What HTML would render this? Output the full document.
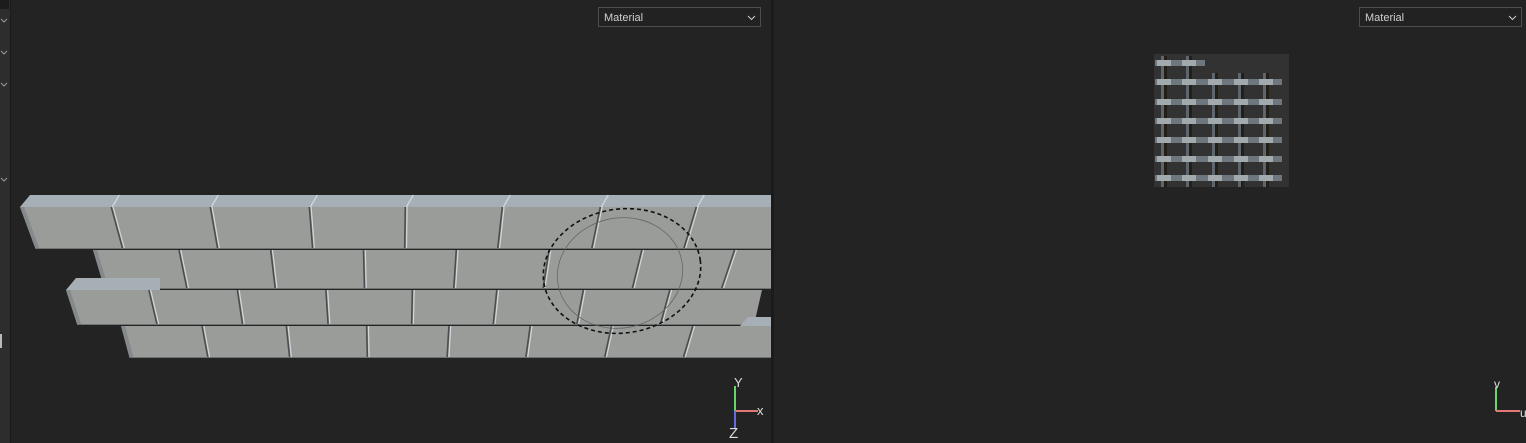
<!DOCTYPE html>
<html><head><meta charset="utf-8">
<style>
html,body{margin:0;padding:0;background:#232323;width:1526px;height:443px;overflow:hidden;font-family:"Liberation Sans",sans-serif}
.dd{position:absolute;top:7px;width:163px;height:20px;border:1px solid #4e4e4e;box-sizing:border-box;background:#222;color:#cfcfcf;font-size:11px;line-height:20px;padding-left:5px}
.dd svg{position:absolute;right:4px;top:7px}
</style></head><body>
<svg id="s" width="1526" height="443" style="position:absolute;left:0;top:0">
<rect x="0" y="0" width="10" height="443" fill="#2d2d2d"/>
<rect x="0" y="0" width="9" height="9" fill="#1c1c1c"/>
<rect x="10" y="0" width="1" height="443" fill="#1b1b1b"/>
<rect x="771" y="0" width="3" height="443" fill="#1b1b1b"/>
<g stroke="#9a9a9a" fill="none" stroke-width="1">
<path d="M1 19 L4 22 L7 19"/><path d="M1 51 L4 54 L7 51"/><path d="M1 83 L4 86 L7 83"/><path d="M1 178 L4 181 L7 178"/>
</g>
<rect x="0" y="334" width="2" height="14" fill="#bbb"/>
<g id="bricks"></g>
<ellipse cx="622" cy="271" rx="79" ry="62" fill="none" stroke="#111" stroke-width="1.6" stroke-dasharray="4 3" transform="rotate(-8 622 271)"/>
<ellipse cx="620" cy="273" rx="63" ry="55" fill="none" stroke="#666" stroke-width="0.8" transform="rotate(-12 620 273)"/>
<rect x="1154" y="54" width="135" height="133" fill="#323232"/>
<g id="tex"></g>
<line x1="735" y1="386" x2="735" y2="411" stroke="#6ad36a" stroke-width="2"/>
<line x1="735" y1="411" x2="758" y2="411" stroke="#e07878" stroke-width="2"/>
<line x1="735" y1="411" x2="735" y2="428" stroke="#6a6ae0" stroke-width="2"/>
<text x="734" y="387" fill="#ddd" font-size="13">Y</text>
<text x="757" y="415" fill="#ddd" font-size="13">x</text>
<text x="729" y="438" fill="#ddd" font-size="15">Z</text>
<line x1="1496" y1="387" x2="1496" y2="411" stroke="#6ad36a" stroke-width="2"/>
<line x1="1496" y1="411" x2="1520" y2="411" stroke="#e07878" stroke-width="2"/>
<text x="1494" y="388" fill="#ddd" font-size="12">v</text>
<text x="1520" y="417" fill="#ddd" font-size="12">u</text>
</svg>
<div class="dd" style="left:598px">Material<svg width="9" height="6"><path d="M1 1 L4.5 4.5 L8 1" stroke="#ccc" fill="none"/></svg></div>
<div class="dd" style="left:1359px">Material<svg width="9" height="6"><path d="M1 1 L4.5 4.5 L8 1" stroke="#ccc" fill="none"/></svg></div>
<script>
(function(){
var g=document.getElementById("bricks"),o="";
function sl(x,h){return (390-x)*0.0010*h;}
var rows=[
 {t:207,b:249,xs:[20,117,214,311,405,500,596,690],end:771,tfAll:true},
 {t:250,b:289,xs:[93,183,273,364,455,546,637,728],end:771},
 {t:290,b:325,xs:[66,153,240,327,412,495,580,665],end:762,tfFirst:true},
 {t:326,b:358,xs:[121,205,288,367,448,528,608,688],end:771,tfLast:true}
];
rows.forEach(function(r){
 var h=r.b-r.t;
 if(r.tfAll){o+='<polygon points="'+(r.xs[0])+','+r.t+' '+(r.xs[0]+10)+','+(r.t-12)+' '+r.end+','+(r.t-12)+' '+r.end+','+r.t+'" fill="#a6aeb6"/>';}
 if(r.tfFirst){o+='<polygon points="66,'+r.t+' 76,'+(r.t-12)+' 160,'+(r.t-12)+' 160,'+r.t+'" fill="#a6aeb6"/>';}
 if(r.tfLast){o+='<polygon points="740,'+r.t+' 748,'+(r.t-9)+' 771,'+(r.t-9)+' 771,'+r.t+'" fill="#a6aeb6"/>';}
 var x0=r.xs[0],d0=sl(x0,h);
 var endb=r.end<771?r.end-8:r.end;
 o+='<polygon points="'+x0+','+r.t+' '+r.end+','+r.t+' '+endb+','+r.b+' '+(x0+d0)+','+r.b+'" fill="#9a9c99"/>';
 o+='<polygon points="'+x0+','+r.t+' '+(x0+4)+','+r.t+' '+(x0+d0+4)+','+r.b+' '+(x0+d0)+','+r.b+'" fill="#85898b"/>';
 for(var i=1;i<r.xs.length;i++){
  var x=r.xs[i],d=sl(x,h),xt=x-d/2,xb=x+d/2;
  o+='<line x1="'+xt+'" y1="'+r.t+'" x2="'+xb+'" y2="'+r.b+'" stroke="#4b4d4e" stroke-width="1.6"/>';
  o+='<line x1="'+(xt+1.8)+'" y1="'+r.t+'" x2="'+(xb+1.8)+'" y2="'+r.b+'" stroke="#d3d7d8" stroke-width="1.2"/>';
  if(r.tfAll){o+='<line x1="'+(xt+1)+'" y1="'+r.t+'" x2="'+(xt+8)+'" y2="'+(r.t-12)+'" stroke="#d8dde0" stroke-width="1.2"/>';}
 }
 o+='<line x1="'+(x0+d0)+'" y1="'+(r.b-0.5)+'" x2="'+endb+'" y2="'+(r.b-0.5)+'" stroke="#6f7172" stroke-width="1"/>';
});
g.innerHTML=o;
var t=document.getElementById("tex"),s="";
var cx=[1164,1189,1215,1241,1266],ry=[63,82,102,121,140,159,178];
cx.forEach(function(x,i){var y0=i<2?56:73;
 s+='<rect x="'+(x-3)+'" y="'+y0+'" width="6" height="'+(187-y0)+'" fill="#241f16"/>';
 s+='<rect x="'+(x-3)+'" y="'+y0+'" width="3" height="'+(187-y0)+'" fill="#5d656d"/>';});
ry.forEach(function(y,j){var xe=j==0?1205:1282;
 s+='<rect x="1155" y="'+(y-3)+'" width="'+(xe-1155)+'" height="6" fill="#6e777e"/>';
 cx.forEach(function(x,i){if(j==0&&i>1)return;s+='<rect x="'+(x-7)+'" y="'+(y-3)+'" width="14" height="6" fill="#a3aaae"/>';});});
t.innerHTML=s;
})();
</script>
</body></html>
